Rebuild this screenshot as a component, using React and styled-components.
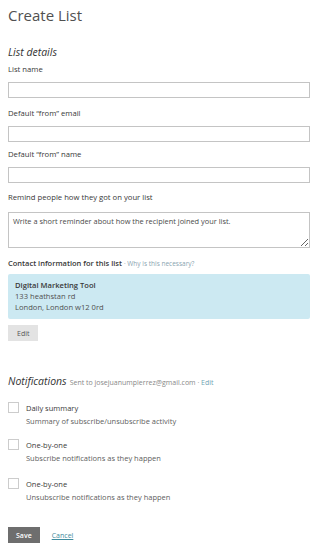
import React from 'react';
import styled, { createGlobalStyle } from 'styled-components';

const GlobalStyle = createGlobalStyle`
    body {
        margin: 0;
        background: #fff;
        font-family: "Open Sans", "Liberation Sans", sans-serif;
        color: #444;
    }
`

const Page = styled.div`
    width: 321px;
    padding: 3px 11px 0 8px;
    box-sizing: border-box;
`
const Title = styled.h1`
    margin: 0;
    font-size: 15px;
    font-weight: 400;
    color: #505050;
    line-height: 24px;
`
const SectionTitle = styled.h2`
    margin: 17px 0 0;
    font-size: 10.5px;
    font-weight: 400;
    font-style: italic;
    color: #333;
    line-height: 16px;
    display: flex;
    align-items: baseline;
    gap: 3px;
`
const Meta = styled.span`
    font-style: normal;
    font-size: 7px;
    color: #888;
`
const Field = styled.div`
    margin-top: ${p => p.$top || 9}px;
    display: flex;
    flex-direction: column;
`
const Label = styled.label`
    font-size: ${p => (p.$bold ? 7.5 : 7.7)}px;
    line-height: 11px;
    color: #383838;
    font-weight: ${p => (p.$bold ? 600 : 400)};
`
const Input = styled.input`
    margin-top: 7px;
    height: 16px;
    border: 1px solid #c4c4c4;
    box-sizing: border-box;
    width: 100%;
    padding: 0 4px;
`
const TextArea = styled.textarea`
    margin-top: 9px;
    height: 36px;
    border: 1px solid #c4c4c4;
    box-sizing: border-box;
    width: 100%;
    padding: 3px 4px;
    font-family: inherit;
    font-size: 7.4px;
    color: #4a4a4a;
    resize: vertical;
    &::placeholder { color: #4a4a4a; }
`
const Hint = styled.span`
    font-size: 6.5px;
    font-weight: 400;
    color: #8a9ba5;
`
const Link = styled.a`
    color: ${p => p.$color || '#4a8fa3'};
    text-decoration: ${p => (p.$under ? 'underline' : 'none')};
    cursor: pointer;
`
const Address = styled.div`
    margin-top: 5px;
    background: #cce9f2;
    border-radius: 2px;
    padding: 6px 7px 6px;
    font-size: 7.6px;
    line-height: 11px;
    color: #505050;
`
const Strong = styled.div`
    font-weight: 600;
    color: #3a3a3a;
`
const Button = styled.button`
    border: none;
    border-radius: 0;
    font-family: inherit;
    font-size: 7px;
    height: 16px;
    padding: 0 ${p => p.$pad || 9}px;
    background: ${p => (p.$primary ? '#6e6e6e' : '#e3e3e3')};
    color: ${p => (p.$primary ? '#fff' : '#555')};
    font-weight: ${p => (p.$primary ? 600 : 400)};
    cursor: pointer;
`
const EditRow = styled.div`
    margin-top: 6px;
    display: flex;
`
const Notifications = styled.div`
    margin-top: 32px;
`
const Option = styled.div`
    display: flex;
    gap: 7px;
    margin-top: ${p => p.$top}px;
`
const Box = styled.span`
    width: 11px;
    height: 11px;
    border: 1px solid #ccc;
    box-sizing: border-box;
    flex-shrink: 0;
`
const OptText = styled.div`
    display: flex;
    flex-direction: column;
    font-size: 7.5px;
    line-height: 13px;
`
const OptTitle = styled.span`
    color: #3a3a3a;
`
const OptSub = styled.span`
    color: #606060;
`
const Actions = styled.div`
    margin-top: 23px;
    display: flex;
    align-items: center;
    gap: 12px;
    font-size: 7px;
`

const options = [
    { title: 'Daily summary', sub: 'Summary of subscribe/unsubscribe activity', top: 11 },
    { title: 'One-by-one', sub: 'Subscribe notifications as they happen', top: 11 },
    { title: 'One-by-one', sub: 'Unsubscribe notifications as they happen', top: 13 },
]

export default function App() {
    return (
        <>
            <GlobalStyle />
            <Page>
                <Title>Create List</Title>
                <SectionTitle>List details</SectionTitle>
                <Field $top={4}>
                    <Label>List name</Label>
                    <Input />
                </Field>
                <Field $top={10}>
                    <Label>Default “from” email</Label>
                    <Input />
                </Field>
                <Field $top={7}>
                    <Label>Default “from” name</Label>
                    <Input />
                </Field>
                <Field $top={9}>
                    <Label>Remind people how they got on your list</Label>
                    <TextArea placeholder="Write a short reminder about how the recipient joined your list." />
                </Field>
                <Field $top={10}>
                    <Label $bold>
                        Contact information for this list <Hint>· <Link $color="#8aa4b0">Why is this necessary?</Link></Hint>
                    </Label>
                    <Address>
                        <Strong>Digital Marketing Tool</Strong>
                        <div>133 heathstan rd</div>
                        <div>London, London w12 0rd</div>
                    </Address>
                </Field>
                <EditRow>
                    <Button>Edit</Button>
                </EditRow>
                <Notifications>
                    <SectionTitle as="div" style={{ marginTop: 0 }}>
                        Notifications <Meta>Sent to josejuanumpierrez@gmail.com · <Link $color="#6fa3b3">Edit</Link></Meta>
                    </SectionTitle>
                    {options.map((o, i) => (
                        <Option key={i} $top={o.top}>
                            <Box />
                            <OptText>
                                <OptTitle>{o.title}</OptTitle>
                                <OptSub>{o.sub}</OptSub>
                            </OptText>
                        </Option>
                    ))}
                </Notifications>
                <Actions>
                    <Button $primary $pad={8}>Save</Button>
                    <Link $under $color="#3f8c9e">Cancel</Link>
                </Actions>
            </Page>
        </>
    )
}
